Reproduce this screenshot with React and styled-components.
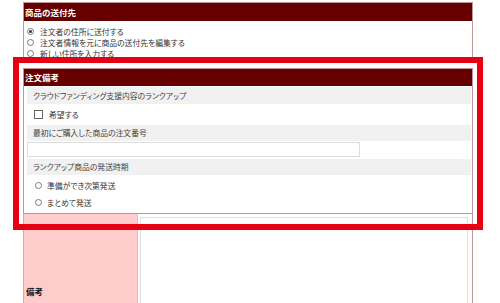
import React from 'react';
import styled, { createGlobalStyle } from 'styled-components';

const GlobalStyle = createGlobalStyle`
  html, body {
    margin: 0;
    padding: 0;
    background: #ffffff;
  }
  body {
    font-family: "Noto Sans CJK JP", "Noto Sans", sans-serif;
    font-feature-settings: "palt";
    color: #333333;
    overflow: hidden;
  }
`;

const Page = styled.div`
  position: relative;
  width: 450px;
  height: 301px;
  overflow: hidden;
  padding: 2px 27px 0 23px;
`;

const Panel = styled.section`
  border: 1px solid #bf9595;
  margin-top: ${(p) => p.$gap || 0}px;
`;

const PanelHeader = styled.div`
  height: ${(p) => p.$h || 17}px;
  background: #660000;
  color: #ffffff;
  font-size: 8.5px;
  font-weight: bold;
  line-height: ${(p) => p.$h || 17}px;
  padding-left: 1px;
`;

const RadioList = styled.div`
  padding: 5px 0 3px 3px;
`;

const Option = styled.label`
  display: flex;
  align-items: center;
  gap: ${(p) => p.$gap || 6}px;
  height: ${(p) => p.$h || 11}px;
  padding-left: ${(p) => p.$indent || 0}px;
  font-size: 7.8px;
`;

const Radio = styled.span`
  position: relative;
  flex: none;
  width: 7px;
  height: 7px;
  box-sizing: border-box;
  border: 1px solid #7a7a7a;
  border-radius: 50%;
  background: #ffffff;

  &::after {
    content: '';
    display: ${(p) => (p.$checked ? 'block' : 'none')};
    position: absolute;
    left: 1px;
    top: 1px;
    width: 3px;
    height: 3px;
    border-radius: 50%;
    background: #333333;
  }
`;

const Body = styled.div`
  padding: 1px 1px 1px 3px;
`;

const Label = styled.div`
  height: ${(p) => p.$h || 16}px;
  margin-top: ${(p) => p.$top || 0}px;
  background: #f1f1f1;
  font-size: 7.8px;
  line-height: ${(p) => p.$h || 16}px;
  padding-left: 6px;
  color: #444444;
`;

const CheckRow = styled.label`
  display: flex;
  align-items: center;
  gap: 6px;
  height: 21px;
  padding-left: 7px;
  font-size: 7.8px;
`;

const Check = styled.span`
  flex: none;
  width: 9px;
  height: 9px;
  box-sizing: border-box;
  border: 1px solid #666666;
  background: #ffffff;
`;

const TextInput = styled.input`
  display: block;
  box-sizing: border-box;
  width: 333px;
  height: 15px;
  margin-top: 1px;
  border: 1px solid #dcdcdc;
  padding: 0;
  outline: none;
`;

const Choices = styled.div`
  padding: 2px 0 1px;
`;

const Table = styled.div`
  display: flex;
  border-left: 1px solid #d9a9a9;
  border-right: 1px solid #bf9595;
`;

const HeadCell = styled.div`
  display: flex;
  align-items: center;
  width: 111px;
  height: 154px;
  padding-left: 2px;
  background: #ffcccc;
  border-right: 1px solid #d8c0c0;
  font-size: 8.5px;
  font-weight: bold;
  color: #111111;
`;

const DataCell = styled.div`
  flex: 1;
  padding: 3px 4px 0 2px;
`;

const TextArea = styled.textarea`
  display: block;
  box-sizing: border-box;
  width: 100%;
  height: 150px;
  border: 1px solid #dedede;
  resize: none;
  outline: none;
`;

const Highlight = styled.div`
  position: absolute;
  left: 13px;
  top: 57px;
  width: 470px;
  height: 173px;
  box-sizing: border-box;
  border: 6px solid #e60012;
  pointer-events: none;
`;

export default function App() {
  return (
    <>
      <GlobalStyle />
      <Page>
        <Panel>
          <PanelHeader $h={18}>商品の送付先</PanelHeader>
          <RadioList>
            <Option><Radio $checked />注文者の住所に送付する</Option>
            <Option><Radio />注文者情報を元に商品の送付先を編集する</Option>
            <Option><Radio />新しい住所を入力する</Option>
          </RadioList>
        </Panel>

        <Panel $gap={5}>
          <PanelHeader>注文備考</PanelHeader>
          <Body>
            <Label $h={17}>クラウドファンディング支援内容のランクアップ</Label>
            <CheckRow><Check />希望する</CheckRow>
            <Label>最初にご購入した商品の注文番号</Label>
            <TextInput type="text" />
            <Label $top={2}>ランクアップ商品の発送時期</Label>
            <Choices>
              <Option $h={17} $indent={8} $gap={5}><Radio />準備ができ次第発送</Option>
              <Option $h={17} $indent={8} $gap={5}><Radio />まとめて発送</Option>
            </Choices>
          </Body>
        </Panel>

        <Table>
          <HeadCell>備考</HeadCell>
          <DataCell>
            <TextArea />
          </DataCell>
        </Table>

        <Highlight />
      </Page>
    </>
  );
}
